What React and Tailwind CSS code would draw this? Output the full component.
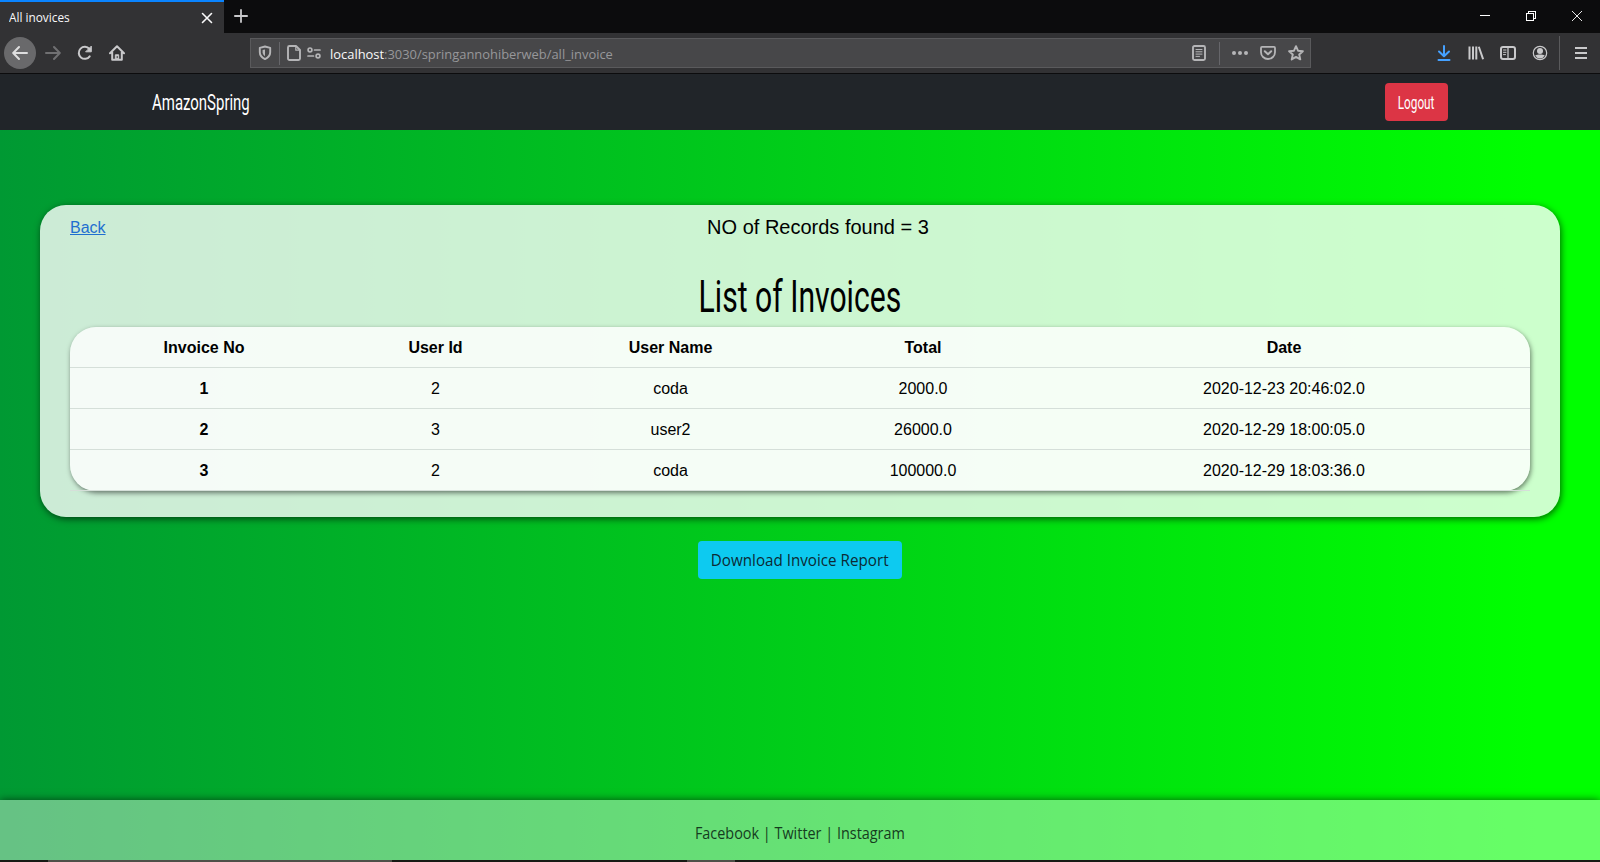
import React from "react";

function Icon({ children, className = "" }) {
  return (
    <svg
      viewBox="0 0 16 16"
      className={`h-4 w-4 shrink-0 ${className}`}
      fill="none"
      stroke="currentColor"
      strokeWidth="2"
      strokeLinecap="round"
      strokeLinejoin="round"
    >
      {children}
    </svg>
  );
}

function Slot({ children, className = "" }) {
  return <div className={`flex h-8 w-8 shrink-0 items-center justify-center ${className}`}>{children}</div>;
}

function TabStrip() {
  return (
    <div className="flex h-[33px] shrink-0 bg-[#0c0c0d] text-[#f9f9fa]">
      <div className="flex w-[224px] items-center justify-between border-t-2 border-[#0a84ff] bg-[#323234] pr-[11px] pl-[9px]">
        <span className="origin-left scale-x-[0.985] font-['Open_Sans','Noto_Sans',sans-serif] text-[12px]">All inovices</span>
        <svg viewBox="0 0 12 12" className="h-3 w-3" stroke="currentColor" strokeWidth="1.6" strokeLinecap="round">
          <path d="M1.5 1.5l9 9M10.5 1.5l-9 9" />
        </svg>
      </div>
      <svg viewBox="0 0 14 14" className="mt-[9px] ml-[10px] h-[14px] w-[14px] text-[#c8c8ca]" stroke="currentColor" strokeWidth="1.8" strokeLinecap="round">
        <path d="M7 .9v12.2M.9 7h12.2" />
      </svg>
      <div className="ml-auto flex h-[31px] items-center">
        <svg viewBox="0 0 10 10" className="mr-[36px] h-[10px] w-[10px]" stroke="#fff" shapeRendering="crispEdges">
          <path d="M0 4.5h10" />
        </svg>
        <svg viewBox="0 0 10 10" className="mr-[36px] h-[10px] w-[10px]" stroke="#fff" fill="none" shapeRendering="crispEdges">
          <path d="M.5 2.5h7v7h-7zM2.5 2.5v-2h7v7h-2" />
        </svg>
        <svg viewBox="0 0 10 10" className="mr-[18px] h-[10px] w-[10px]" stroke="#fff" strokeWidth=".9">
          <path d="M0 0l10 10M10 0L0 10" />
        </svg>
      </div>
    </div>
  );
}

function AddressBar() {
  return (
    <div className="ml-[117px] flex h-[30px] w-[1061px] items-center border border-[#5a5a5c] bg-[#474749] text-[#b5b5b7]">
      <svg viewBox="0 0 14 16" className="ml-[7px] h-4 w-[14px]" fill="none" stroke="currentColor" strokeWidth="1.9" strokeLinejoin="round">
        <path d="M7 1.5l5.2 1.3v4.4c0 3-1.8 5.2-5.2 6.9-3.4-1.7-5.2-3.9-5.2-6.900V2.800z" />
        <path d="M7 4.500v6.800C5.300 10 4.600 8.600 4.600 7.200V5z" fill="currentColor" stroke="none" />
      </svg>
      <div className="ml-[7px] h-[23px] w-px bg-[#66666a]" />
      <svg viewBox="0 0 14 16" className="ml-[7px] h-4 w-[14px]" fill="none" stroke="currentColor" strokeWidth="1.9" strokeLinejoin="round">
        <path d="M2.500 1H9l4 4v8.500A1.500 1.500 0 0 1 11.500 15h-9A1.500 1.500 0 0 1 1 13.500v-11A1.500 1.500 0 0 1 2.500 1z" />
        <path d="M8.800 1v4.200H13" strokeWidth="1.200" />
      </svg>
      <svg viewBox="0 0 14 12" className="ml-[6px] h-3 w-[14px]" fill="none" stroke="currentColor" strokeWidth="1.700" strokeLinecap="round">
        <circle cx="3" cy="2.900" r="1.900" />
        <path d="M7.500 3h5.500M1 9h5.500" />
        <circle cx="11" cy="9" r="1.900" />
      </svg>
      <div className="ml-[9px] origin-left scale-x-[0.956] pt-[2px] font-['Open_Sans','Noto_Sans',sans-serif] text-[13.5px] text-[#97979a]">
        <span className="text-[#f9f9fa]">localhost</span>:3030/springannohiberweb/all_invoice
      </div>
      <div className="ml-auto flex items-center">
        <Icon>
          <rect x="2" y="1" width="12" height="14" rx="1.500" strokeWidth="1.900" />
          <path d="M5 4.500h6M5 6.800h6M5 9.100h6M5 11.400h3.500" strokeWidth="1" />
        </Icon>
        <div className="ml-[12px] h-[23px] w-px bg-[#66666a]" />
        <Icon className="ml-[12px]">
          <g fill="currentColor" stroke="none">
            <circle cx="2" cy="8" r="2" />
            <circle cx="8" cy="8" r="2" />
            <circle cx="14" cy="8" r="2" />
          </g>
        </Icon>
        <Icon className="ml-[12px]">
          <path d="M2 1.900h12c.6 0 1 .4 1 1v4.300a7 6.800 0 0 1-14 0V2.900c0-.6.4-1 1-1z" strokeWidth="1.800" />
          <path d="M4.800 6.200L8 9.200l3.200-3" strokeWidth="2" />
        </Icon>
        <Icon className="mr-[6px] ml-[12px]">
          <path d="M8 1.200l2 4.500 4.900.5-3.700 3.300 1.100 4.900L8 11.900l-4.300 2.500 1.100-4.900L1.100 6.200 6 5.700z" strokeWidth="1.900" />
        </Icon>
      </div>
    </div>
  );
}

function Toolbar() {
  return (
    <div className="flex h-[41px] shrink-0 items-center border-b border-[#0c0c0d] bg-[#323234] pl-1 text-[#c9c9cb]">
      <Slot className="rounded-full bg-[#69696b]">
        <Icon className="text-[#dededf]">
          <path d="M15 8H1.500M7 2L1.200 8 7 14" />
        </Icon>
      </Slot>
      <Slot className="ml-px">
        <Icon className="text-[#707072]">
          <path d="M1 8h13.500M9 2l5.800 6L9 14" />
        </Icon>
      </Slot>
      <Slot>
        <Icon>
          <path d="M12.700 11.300A6 6 0 1 1 12.400 4" />
          <path d="M14.300 1.500v5.300H9z" fill="currentColor" strokeWidth="1" />
        </Icon>
      </Slot>
      <Slot>
        <Icon>
          <path d="M1 8.300L8 1.300l7 7M3.200 7v7.800h9.600V7" />
          <path d="M6.300 14.500v-4.700h3.400v4.700" fill="currentColor" strokeWidth="1" />
          <path d="M8.200 11.500v1.200" stroke="#323234" strokeWidth="1" />
        </Icon>
      </Slot>
      <AddressBar />
      <div className="ml-auto flex items-center">
        <Slot className="text-[#45a1ff]">
          <Icon>
            <path d="M8 1v10M3 6.500L8 11.300l5-4.800M2.500 15h11" />
          </Icon>
        </Slot>
        <Slot>
          <Icon>
            <path d="M1.500 1.500v13M5 1.500v13M8.300 1.500v13M10.800 1.700l4.300 12.600" strokeLinecap="butt" />
          </Icon>
        </Slot>
        <Slot>
          <Icon>
            <rect x="1" y="2" width="14" height="12" rx="2" />
            <path d="M8 2v12" strokeWidth="1.300" />
            <path d="M3.500 5h2.500M3.500 7.300h2.500M3.500 9.600h2" strokeWidth="1" />
          </Icon>
        </Slot>
        <Slot>
          <Icon>
            <circle cx="8" cy="8" r="6.700" strokeWidth="1.200" />
            <circle cx="8" cy="6" r="3" fill="currentColor" stroke="none" />
            <path d="M3.200 10.600c1.300-.8 2.800-1 4.800-1s3.500.2 4.800 1A5.500 5.500 0 0 1 8 13.500a5.500 5.500 0 0 1-4.800-2.900z" fill="currentColor" stroke="none" />
          </Icon>
        </Slot>
        <div className="ml-[3px] h-[34px] w-px bg-[#5a5a5c]" />
        <Slot className="mr-[3px] ml-[5px]">
          <svg viewBox="0 0 12 12" className="h-3 w-3" stroke="currentColor" strokeWidth="2">
            <path d="M0 1h12M0 6h12M0 11h12" />
          </svg>
        </Slot>
      </div>
    </div>
  );
}

const headings = ["Invoice No", "User Id", "User Name", "Total", "Date"];
const invoices = [
  ["1", "2", "coda", "2000.0", "2020-12-23 20:46:02.0"],
  ["2", "3", "user2", "26000.0", "2020-12-29 18:00:05.0"],
  ["3", "2", "coda", "100000.0", "2020-12-29 18:03:36.0"],
];

function InvoiceTable() {
  return (
    <table className="w-full table-fixed border-separate border-spacing-0 rounded-[26px] bg-white/80 text-center text-base leading-6 text-black shadow-[1px_2px_5px_rgba(0,0,0,0.5)]">
      <colgroup>
        <col className="w-[268px]" />
        <col className="w-[195px]" />
        <col className="w-[275px]" />
        <col className="w-[230px]" />
        <col />
      </colgroup>
      <thead>
        <tr>
          {headings.map((h) => (
            <th key={h} className="h-[41px] border-b border-[#d5dfd9] p-0 pt-[2px] font-bold">{h}</th>
          ))}
        </tr>
      </thead>
      <tbody>
        {invoices.map((row) => (
          <tr key={row[0]}>
            {row.map((cell, i) => (
              <td key={i} className="h-[41px] border-b border-[#d5dfd9] p-0 pt-[2px] first:font-bold">{cell}</td>
            ))}
          </tr>
        ))}
      </tbody>
    </table>
  );
}

export default function App() {
  return (
    <div className="flex h-[862px] w-[1600px] flex-col overflow-hidden font-['Liberation_Sans',Arial,sans-serif]">
      <TabStrip />
      <Toolbar />
      <nav className="flex h-14 shrink-0 items-center justify-between bg-[#212529] pr-[152px] pl-[152px] font-['Roboto',sans-serif] text-white">
        <span className="w-[98px] origin-left scale-x-[0.68] pt-[2px] text-[22px] leading-none font-normal whitespace-nowrap">AmazonSpring</span>
        <button className="flex h-[38px] w-[63px] items-center justify-center rounded-[4px] bg-[#dc3545]">
          <span className="scale-x-[0.655] pt-px text-[18px] leading-none font-normal">Logout</span>
        </button>
      </nav>
      <main className="flex min-h-0 flex-1 flex-col bg-linear-to-r/srgb from-[#009933] to-[#00ff00] to-[96%]">
        <div className="flex min-h-0 flex-1 flex-col items-center px-10 pt-[75px]">
          <section className="h-[312px] w-full rounded-[26px] bg-white/80 px-[30px] shadow-[1px_2px_7px_rgba(0,0,0,0.6)]">
            <div className="flex h-[64px] items-start pt-[10px]">
              <a href="#" className="w-9 pt-px text-base leading-6 text-[#1f6fd0] underline">Back</a>
              <p className="flex-1 text-center text-[20px] leading-6 text-black">NO of Records found = 3</p>
            </div>
            <h1 className="flex h-[58px] items-center justify-center pb-[2px] font-['Roboto',sans-serif] text-[44px] leading-none font-normal text-black">
              <span className="scale-x-[0.685] whitespace-nowrap">List of Invoices</span>
            </h1>
            <InvoiceTable />
          </section>
          <button className="mt-[24px] flex h-[38px] w-[204px] items-center justify-center rounded-[4px] bg-[#0dcaf0] pt-[2px] font-['Open_Sans','Noto_Sans',sans-serif] text-[15.5px] text-[#0c2a35]">
            <span className="scale-x-[0.98] whitespace-nowrap">Download Invoice Report</span>
          </button>
        </div>
        <footer className="flex h-[60px] shrink-0 items-center justify-center bg-white/40 pt-[7px] font-['Open_Sans','Noto_Sans',sans-serif] text-[15.5px] text-[#153c1e] shadow-[0_0_8px_rgba(0,0,0,0.6)]">
          <span className="scale-x-[0.93]">Facebook | Twitter | Instagram</span>
        </footer>
      </main>
      <div className="flex h-[2px] shrink-0 bg-[#161a14]">
        <div className="ml-12 w-[344px] bg-[#4d5048]" />
        <div className="ml-[295px] w-12 bg-[#4d5048]" />
      </div>
    </div>
  );
}
